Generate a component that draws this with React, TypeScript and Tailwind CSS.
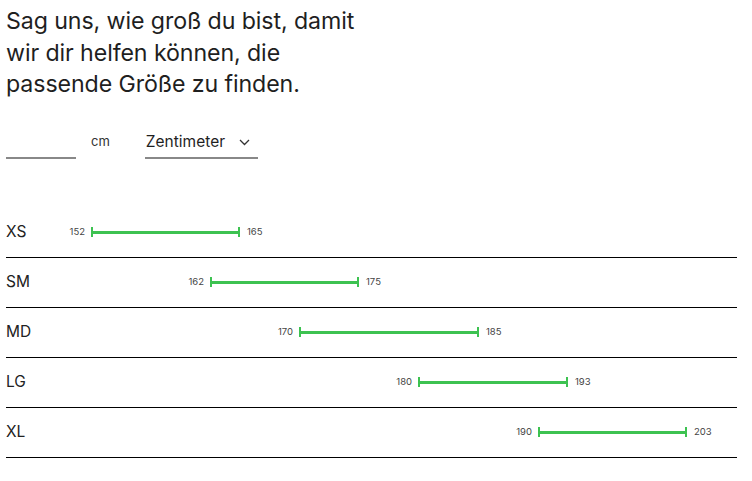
import React from 'react';

const sizes = [
  { label: 'XS', min: 152, max: 165, left: 92, right: 239 },
  { label: 'SM', min: 162, max: 175, left: 211, right: 358 },
  { label: 'MD', min: 170, max: 185, left: 300, right: 478 },
  { label: 'LG', min: 180, max: 193, left: 419, right: 567 },
  { label: 'XL', min: 190, max: 203, left: 539, right: 686 },
];

const App = () => {
  return (
    <div className="w-[752px] h-[481px] bg-white text-[#1f1f1f] px-[6px] overflow-hidden" style={{ fontFamily: 'Inter, "Noto Sans", sans-serif' }}>
      <h1 className="pt-[6px] text-[23.2px] leading-[31.5px] font-normal tracking-[-0.1px]">
        Sag uns, wie groß du bist, damit
        <br />
        wir dir helfen können, die
        <br />
        passende Größe zu finden.
      </h1>

      {/* Eingabe */}
      <div className="mt-[20px] flex items-end h-[38px]">
        <div className="w-[70px] h-[32px] border-b-2 border-[#888]" />
        <span className="ml-[15px] mb-[7px] text-[13px] text-[#333]">cm</span>
        <div className="ml-[35px] w-[113px] h-[32px] border-b-2 border-[#888] flex items-center justify-between pt-[1px]">
          <span className="text-[15.5px] pl-[1px]">Zentimeter</span>
          <svg width="11" height="7" viewBox="0 0 11 7" className="mr-[8px]">
            <path d="M1 1l4.5 4.5L10 1" fill="none" stroke="#333" strokeWidth="1.3" />
          </svg>
        </div>
      </div>

      {/* Größentabelle */}
      <div className="mt-[49px] w-[731px]">
        {sizes.map((s) => (
          <div key={s.label} className="relative h-[50px] border-b border-black flex items-center">
            <span className="text-[15.5px] text-[#222]">{s.label}</span>
            <div className="absolute top-[19px] h-[10px]" style={{ left: s.left - 7, width: s.right - s.left + 2 }}>
              <span className="absolute right-full mr-[6px] top-[-2px] text-[9.5px] text-[#444]">{s.min}</span>
              <div className="absolute left-0 top-0 w-[2px] h-[10px] bg-[#3dc251]" />
              <div className="absolute left-0 right-0 top-[4px] h-[3px] bg-[#3dc251]" />
              <div className="absolute right-0 top-0 w-[2px] h-[10px] bg-[#3dc251]" />
              <span className="absolute left-full ml-[7px] top-[-2px] text-[9.5px] text-[#444]">{s.max}</span>
            </div>
          </div>
        ))}
      </div>
    </div>
  );
};

export default App;
